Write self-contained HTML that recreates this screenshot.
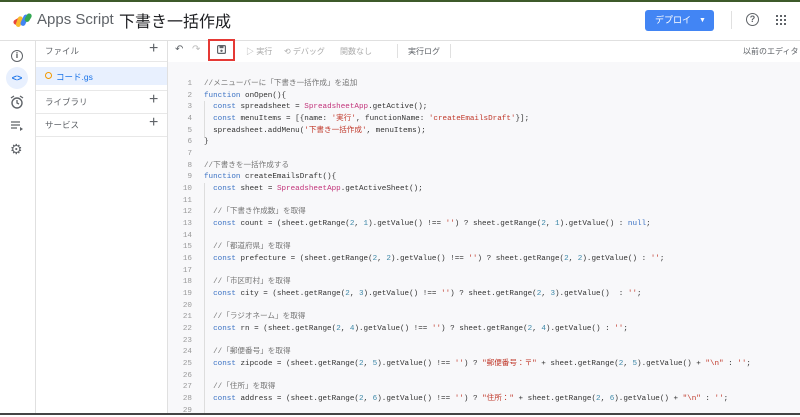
<!DOCTYPE html>
<html><head><meta charset="utf-8"><style>
*{margin:0;padding:0;box-sizing:border-box}
body{width:800px;height:415px;overflow:hidden;background:#fff;font-family:"Liberation Sans","Noto Sans CJK JP",sans-serif;position:relative;color:#3c4043}
.abs{position:absolute}
.code{position:absolute;left:168px;top:62px;width:632px;height:351px;background:#f8f8fa}
.ln{position:absolute;left:168px;width:24px;text-align:right;font:7.6px "Liberation Mono","Noto Sans CJK JP",monospace;color:#999;line-height:11.67px}
.cl{position:absolute;left:204px;font:7.6px "Liberation Mono","Noto Sans CJK JP",monospace;color:#333;line-height:11.67px;white-space:pre}
.k{color:#3b72c4}.a{color:#c2337a}.s{color:#c0392b}.n{color:#3d88a8}.c{color:#777}
.tb{font-size:8px;color:#aaa}
</style></head><body>
<div class="abs" style="left:0;top:0;width:800px;height:2px;background:#3d5a2a"></div>
<div class="abs" style="left:0;top:40px;width:800px;height:1px;background:#e0e0e0"></div>
<svg class="abs" style="left:12px;top:12px" width="22" height="16" viewBox="0 0 22 16">
<rect x="1" y="7" width="9" height="5" rx="2.5" fill="#e8453c" transform="rotate(-30 5 9)"/>
<rect x="5" y="4" width="5" height="11" rx="2.5" fill="#f9bb2d" transform="rotate(20 7 9)"/>
<rect x="10" y="2" width="5" height="12" rx="2.5" fill="#4285f4" transform="rotate(25 12 8)"/>
<rect x="14" y="1" width="5" height="9" rx="2.5" fill="#34a853" transform="rotate(30 16 5)"/>
</svg>
<div class="abs" style="left:37px;top:11px;font-size:15px;color:#5f6368">Apps Script</div>
<div class="abs" style="left:119px;top:8px;font-size:16px;color:#202124">下書き一括作成</div>
<div class="abs" style="left:645px;top:10px;width:69px;height:21px;background:#4285f4;border-radius:3px;color:#fff;font-size:9px;line-height:21px;padding-left:10px">デプロイ<span style="position:absolute;left:54px;top:0;font-size:7px">▼</span></div>
<div class="abs" style="left:731px;top:11px;width:1px;height:18px;background:#e0e0e0"></div>
<div class="abs" style="left:746px;top:13px;width:13px;height:13px;border:1.5px solid #5f6368;border-radius:50%;font-size:9px;line-height:10px;text-align:center;font-weight:bold;color:#5f6368">?</div>
<svg class="abs" style="left:776px;top:15px" width="10" height="10"><g fill="#5f6368"><rect x="0" y="0" width="2" height="2"/><rect x="4" y="0" width="2" height="2"/><rect x="8" y="0" width="2" height="2"/><rect x="0" y="4" width="2" height="2"/><rect x="4" y="4" width="2" height="2"/><rect x="8" y="4" width="2" height="2"/><rect x="0" y="8" width="2" height="2"/><rect x="4" y="8" width="2" height="2"/><rect x="8" y="8" width="2" height="2"/></g></svg>
<div class="abs" style="left:35px;top:41px;width:1px;height:374px;background:#e0e0e0"></div>
<div class="abs" style="left:11px;top:50px;width:12px;height:12px;border:1.3px solid #5f6368;border-radius:50%;font-size:8px;text-align:center;line-height:10px;font-weight:bold">i</div>
<div class="abs" style="left:6px;top:67px;width:22px;height:22px;background:#e8f0fe;border-radius:50%;color:#1a73e8;font-size:9px;text-align:center;line-height:22px;font-weight:bold">&lt;&gt;</div>
<svg class="abs" style="left:10px;top:95px" width="14" height="14"><circle cx="7" cy="8" r="5" fill="none" stroke="#5f6368" stroke-width="1.4"/><path d="M7 5v3l2 1M1 3l3-2M13 3l-3-2" stroke="#5f6368" stroke-width="1.3" fill="none"/></svg>
<svg class="abs" style="left:11px;top:120px" width="13" height="12"><path d="M0 2h9M0 5h9M0 8h6" stroke="#5f6368" stroke-width="1.3"/><path d="M9 7l3 2-3 2z" fill="#5f6368"/></svg>
<div class="abs" style="left:10px;top:141px;font-size:14px;color:#5f6368">⚙</div>
<div class="abs" style="left:167px;top:41px;width:1px;height:374px;background:#e0e0e0"></div>
<div class="abs" style="left:45px;top:45px;font-size:8.5px;color:#5f6368">ファイル</div>
<div class="abs" style="left:149px;top:40px;font-size:16px;color:#5f6368">+</div>
<div class="abs" style="left:36px;top:61px;width:131px;height:1px;background:#e8e8e8"></div>
<div class="abs" style="left:36px;top:67px;width:131px;height:18px;background:#e8f0fe"></div>
<div class="abs" style="left:45px;top:72px;width:7px;height:7px;border:1.3px solid #f29900;border-radius:50%"></div>
<div class="abs" style="left:56px;top:71px;font-size:8.5px;color:#1a73e8">コード.gs</div>
<div class="abs" style="left:36px;top:90px;width:131px;height:1px;background:#e8e8e8"></div>
<div class="abs" style="left:45px;top:96px;font-size:8.5px;color:#5f6368">ライブラリ</div>
<div class="abs" style="left:149px;top:91px;font-size:16px;color:#5f6368">+</div>
<div class="abs" style="left:36px;top:113px;width:131px;height:1px;background:#e8e8e8"></div>
<div class="abs" style="left:45px;top:119px;font-size:8.5px;color:#5f6368">サービス</div>
<div class="abs" style="left:149px;top:114px;font-size:16px;color:#5f6368">+</div>
<div class="abs" style="left:36px;top:136px;width:131px;height:1px;background:#e8e8e8"></div>
<div class="abs" style="left:168px;top:62px;width:632px;height:1px;background:#e0e0e0"></div>
<div class="abs" style="left:175px;top:44px;font-size:10px;color:#5f6368">↶</div>
<div class="abs" style="left:192px;top:44px;font-size:10px;color:#bbb">↷</div>
<div class="abs" style="left:208px;top:39px;width:27px;height:22px;border:2px solid #e53935"></div>
<svg class="abs" style="left:217px;top:45px" width="9" height="9"><rect x="0.6" y="0.6" width="7.8" height="7.8" rx="1" fill="none" stroke="#5f6368" stroke-width="1.2"/><rect x="2.5" y="1" width="4" height="2.2" fill="#5f6368"/><circle cx="4.5" cy="5.8" r="1.2" fill="#5f6368"/></svg>
<div class="abs tb" style="left:246px;top:46px">▷ 実行</div>
<div class="abs tb" style="left:284px;top:46px">⟲ デバッグ</div>
<div class="abs tb" style="left:340px;top:46px">関数なし</div>
<div class="abs" style="left:397px;top:44px;width:1px;height:14px;background:#e0e0e0"></div>
<div class="abs" style="left:408px;top:46px;font-size:8px;color:#5f6368">実行ログ</div>
<div class="abs" style="left:450px;top:44px;width:1px;height:14px;background:#e0e0e0"></div>
<div class="abs" style="left:743px;top:46px;font-size:8px;color:#5f6368;white-space:nowrap">以前のエディタ</div>
<div class="code"></div>
<div class="abs" style="left:204px;top:101px;width:1px;height:36px;background:#ddd"></div>
<div class="abs" style="left:204px;top:183px;width:1px;height:230px;background:#ddd"></div>
<div class="ln" style="top:79px">1<br>2<br>3<br>4<br>5<br>6<br>7<br>8<br>9<br>10<br>11<br>12<br>13<br>14<br>15<br>16<br>17<br>18<br>19<br>20<br>21<br>22<br>23<br>24<br>25<br>26<br>27<br>28<br>29</div>
<div class="cl" style="top:79px"><span class="c">//メニューバーに「下書き一括作成」を追加</span>
<span class="k">function</span> onOpen(){
  <span class="k">const</span> spreadsheet = <span class="a">SpreadsheetApp</span>.getActive();
  <span class="k">const</span> menuItems = [{name: <span class="s">'実行'</span>, functionName: <span class="s">'createEmailsDraft'</span>}];
  spreadsheet.addMenu(<span class="s">'下書き一括作成'</span>, menuItems);
}

<span class="c">//下書きを一括作成する</span>
<span class="k">function</span> createEmailsDraft(){
  <span class="k">const</span> sheet = <span class="a">SpreadsheetApp</span>.getActiveSheet();

  <span class="c">//「下書き作成数」を取得</span>
  <span class="k">const</span> count = (sheet.getRange(<span class="n">2</span>, <span class="n">1</span>).getValue() !== <span class="s">''</span>) ? sheet.getRange(<span class="n">2</span>, <span class="n">1</span>).getValue() : <span class="k">null</span>;

  <span class="c">//「都道府県」を取得</span>
  <span class="k">const</span> prefecture = (sheet.getRange(<span class="n">2</span>, <span class="n">2</span>).getValue() !== <span class="s">''</span>) ? sheet.getRange(<span class="n">2</span>, <span class="n">2</span>).getValue() : <span class="s">''</span>;

  <span class="c">//「市区町村」を取得</span>
  <span class="k">const</span> city = (sheet.getRange(<span class="n">2</span>, <span class="n">3</span>).getValue() !== <span class="s">''</span>) ? sheet.getRange(<span class="n">2</span>, <span class="n">3</span>).getValue()  : <span class="s">''</span>;

  <span class="c">//「ラジオネーム」を取得</span>
  <span class="k">const</span> rn = (sheet.getRange(<span class="n">2</span>, <span class="n">4</span>).getValue() !== <span class="s">''</span>) ? sheet.getRange(<span class="n">2</span>, <span class="n">4</span>).getValue() : <span class="s">''</span>;

  <span class="c">//「郵便番号」を取得</span>
  <span class="k">const</span> zipcode = (sheet.getRange(<span class="n">2</span>, <span class="n">5</span>).getValue() !== <span class="s">''</span>) ? <span class="s">"郵便番号：〒"</span> + sheet.getRange(<span class="n">2</span>, <span class="n">5</span>).getValue() + <span class="s">"\n"</span> : <span class="s">''</span>;

  <span class="c">//「住所」を取得</span>
  <span class="k">const</span> address = (sheet.getRange(<span class="n">2</span>, <span class="n">6</span>).getValue() !== <span class="s">''</span>) ? <span class="s">"住所："</span> + sheet.getRange(<span class="n">2</span>, <span class="n">6</span>).getValue() + <span class="s">"\n"</span> : <span class="s">''</span>;
</div>
<div class="abs" style="left:0;top:413px;width:800px;height:2px;background:#444"></div>
</body></html>
